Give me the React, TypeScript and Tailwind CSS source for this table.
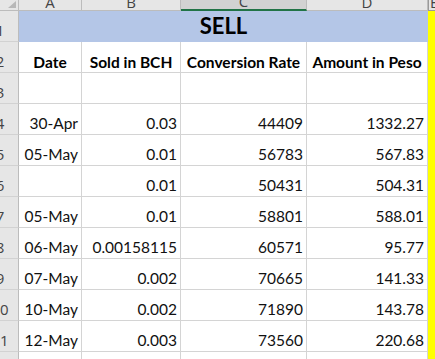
import type { ReactNode } from "react"

type Row = { n: number; date: string; sold: string; rate: string; amt: string }

const rows: Row[] = [
  { n: 4, date: "30-Apr", sold: "0.03", rate: "44409", amt: "1332.27" },
  { n: 5, date: "05-May", sold: "0.01", rate: "56783", amt: "567.83" },
  { n: 6, date: "", sold: "0.01", rate: "50431", amt: "504.31" },
  { n: 7, date: "05-May", sold: "0.01", rate: "58801", amt: "588.01" },
  { n: 8, date: "06-May", sold: "0.00158115", rate: "60571", amt: "95.77" },
  { n: 9, date: "07-May", sold: "0.002", rate: "70665", amt: "141.33" },
  { n: 10, date: "10-May", sold: "0.002", rate: "71890", amt: "143.78" },
  { n: 11, date: "12-May", sold: "0.003", rate: "73560", amt: "220.68" },
]

function RowHead({ n }: { n: number | string }) {
  return (
    <div className="flex items-end overflow-hidden bg-[#e6e6e6] border-r border-b border-r-[#bcbcbc] border-b-[#d2d2d2]">
      <div className="-ml-[18px] w-[36px] shrink-0 pb-[3px] text-center text-[15px] leading-none text-[#444] font-['Open_Sans',sans-serif]">
        {n}
      </div>
    </div>
  )
}

function ColHead({ label, active }: { label: string; active?: boolean }) {
  return (
    <div
      className={
        active
          ? "flex items-end justify-center overflow-hidden bg-[#d2d2d2] border-r border-r-[#bcbcbc] border-b-2 border-b-[#217346]"
          : "flex items-end justify-center overflow-hidden bg-[#e6e6e6] border-r border-b border-[#bcbcbc]"
      }
    >
      <span className="text-[15px] leading-none text-[#444] font-['Open_Sans',sans-serif]">{label}</span>
    </div>
  )
}

function Cell({ children, align = "right" }: { children?: ReactNode; align?: "right" | "center" }) {
  return (
    <div
      className={
        align === "center"
          ? "flex items-end justify-center border-r border-b border-[#d4d4d4] pb-[2px] text-[15.5px] font-bold leading-none text-black whitespace-nowrap"
          : "flex items-end justify-end border-r border-b border-[#d4d4d4] pb-[3px] pr-[3px] text-[15.5px] leading-none text-[#111] whitespace-nowrap"
      }
    >
      {children}
    </div>
  )
}

function Yellow() {
  return <div className="bg-[#ffff00]" />
}

export default function App() {
  return (
    <div className="w-[435px] h-[359px] overflow-hidden bg-white font-['Lato',sans-serif]">
      <div className="grid w-[440px] grid-cols-[19px_63px_99px_126px_121px_12px] grid-rows-[11px_repeat(12,31px)]">
        {/* column headers */}
        <div className="relative bg-[#e6e6e6] border-r border-b border-[#bcbcbc]">
          <svg className="absolute right-[2px] bottom-[2px]" width="8" height="7" viewBox="0 0 8 7">
            <polygon points="8,0 8,7 0,7" fill="#b8b8b8" />
          </svg>
        </div>
        <ColHead label="A" />
        <ColHead label="B" />
        <ColHead label="C" active />
        <ColHead label="D" />
        <div className="flex items-end overflow-hidden bg-[#e6e6e6] border-l border-b border-[#9a9a9a] pl-[1px]">
          <span className="text-[15px] leading-none text-[#444] font-['Open_Sans',sans-serif]">E</span>
        </div>

        {/* row 1 */}
        <RowHead n={1} />
        <div className="col-span-4 flex items-end justify-center bg-[#b4c6e7] pb-[5px] text-[22px] font-bold leading-none text-black">
          SELL
        </div>
        <Yellow />

        {/* row 2 */}
        <RowHead n={2} />
        <Cell align="center">Date</Cell>
        <Cell align="center">Sold in BCH</Cell>
        <Cell align="center">Conversion Rate</Cell>
        <Cell align="center">Amount in Peso</Cell>
        <Yellow />

        {/* row 3 */}
        <RowHead n={3} />
        <Cell />
        <Cell />
        <Cell />
        <Cell />
        <Yellow />

        {rows.map((r) => (
          <div key={r.n} className="contents">
            <RowHead n={r.n} />
            <Cell>{r.date}</Cell>
            <Cell>{r.sold}</Cell>
            <Cell>{r.rate}</Cell>
            <Cell>{r.amt}</Cell>
            <Yellow />
          </div>
        ))}

        {/* row 12, cut off */}
        <RowHead n={12} />
        <Cell />
        <Cell />
        <Cell />
        <Cell />
        <Yellow />
      </div>
    </div>
  )
}
